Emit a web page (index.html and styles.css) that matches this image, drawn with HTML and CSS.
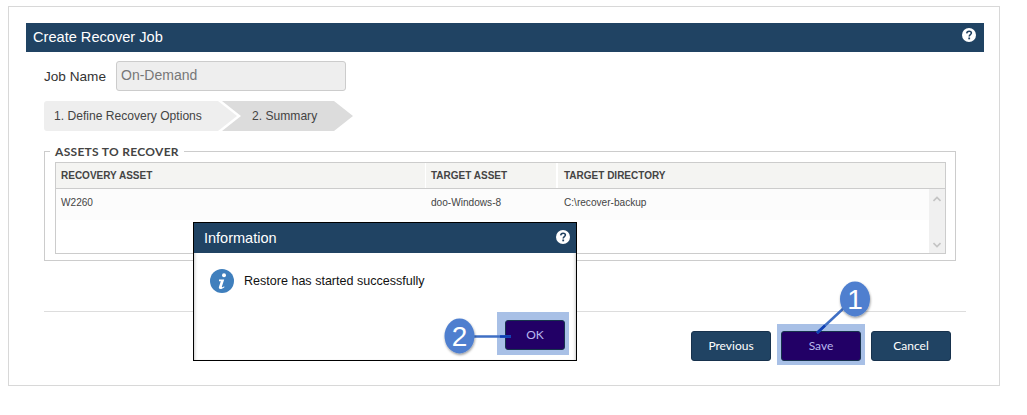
FILE: index.html
```html
<!DOCTYPE html>
<html lang="en">
<head>
<meta charset="utf-8">
<title>Create Recover Job</title>
<link rel="stylesheet" href="styles.css">
</head>
<body>
<main class="panel">
  <header class="titlebar">
    <h1 class="title">Create Recover Job</h1>
    <svg class="help help-main" viewBox="0 0 14 14"><circle cx="7" cy="7" r="7" fill="#fff"/><path d="M4.7 5.4C4.8 3.9 5.8 3.2 7.1 3.2C8.5 3.2 9.4 4 9.4 5.1C9.4 6.6 7.2 6.7 7.2 8.4" fill="none" stroke="#1f3f5f" stroke-width="1.5"/><rect x="6.3" y="9.5" width="1.8" height="1.8" fill="#1f3f5f"/></svg>
  </header>
  <div class="jobrow">
    <label class="joblabel">Job Name</label>
    <div class="jobinput">On-Demand</div>
  </div>
  <div class="steps">
    <div class="step step-one">1. Define Recovery Options</div>
    <div class="step step-two">2. Summary</div>
  </div>
  <section class="assets">
    <h2 class="legend">ASSETS TO RECOVER</h2>
    <div class="table">
      <div class="thead">
        <div class="th col-a">RECOVERY ASSET</div>
        <div class="th col-b">TARGET ASSET</div>
        <div class="th col-c">TARGET DIRECTORY</div>
      </div>
      <div class="tbody">
        <div class="rows">
          <div class="row">
            <div class="td col-a">W2260</div>
            <div class="td col-b">doo-Windows-8</div>
            <div class="td col-c">C:\recover-backup</div>
          </div>
        </div>
        <div class="scrollbar">
          <svg class="arrow" viewBox="0 0 8 6"><path d="M0.5 5L4 1.5L7.5 5" fill="none" stroke="#c4c4c4" stroke-width="1.6"/></svg>
          <svg class="arrow" viewBox="0 0 8 6"><path d="M0.5 1L4 4.5L7.5 1" fill="none" stroke="#c4c4c4" stroke-width="1.6"/></svg>
        </div>
      </div>
    </div>
  </section>
  <hr class="divider">
  <footer class="actions">
    <button class="btn">Previous</button>
    <button class="btn btn-active btn-save">Save</button>
    <button class="btn">Cancel</button>
  </footer>
</main>

<div class="dialog">
  <header class="dialog-title">
    <span>Information</span>
    <svg class="help help-dialog" viewBox="0 0 14 14"><circle cx="7" cy="7" r="7" fill="#fff"/><path d="M4.7 5.4C4.8 3.9 5.8 3.2 7.1 3.2C8.5 3.2 9.4 4 9.4 5.1C9.4 6.6 7.2 6.7 7.2 8.4" fill="none" stroke="#1f3f5f" stroke-width="1.5"/><rect x="6.3" y="9.5" width="1.8" height="1.8" fill="#1f3f5f"/></svg>
  </header>
  <div class="dialog-body">
    <svg class="info" viewBox="0 0 24 24"><circle cx="12" cy="12" r="12" fill="#3f7fbd"/><circle cx="14" cy="6.2" r="2" fill="#fff"/><path d="M9 10.5H14.2L11.9 17.6C11.7 18.3 12.4 18.5 13 18.1L14.2 17.3L14.4 18.2C13 19.4 11.8 20 10.4 20C9 20 8.6 19 9 17.8L10.8 12.2H9Z" fill="#fff"/></svg>
    <p class="message">Restore has started successfully</p>
  </div>
  <div class="dialog-foot">
    <button class="btn btn-active btn-ok">OK</button>
  </div>
</div>

<svg class="callouts" viewBox="0 0 1027 415">
  <defs>
    <filter id="shade" x="-30%" y="-30%" width="160%" height="160%"><feDropShadow dx="0.5" dy="1.5" stdDeviation="1.2" flood-color="#000" flood-opacity="0.4"/></filter>
  </defs>
  <path d="M473 336.500H511" stroke="#3f6fc4" stroke-width="2.500"/>
  <path d="M500 336.500H511" stroke="#0f3fb4" stroke-width="2.500"/>
  <path d="M845 307L817 333" stroke="#3f6fc4" stroke-width="2.500"/>
  <path d="M825 325.500L817 333" stroke="#0f3fb4" stroke-width="2.500"/>
  <ellipse cx="459.500" cy="336" rx="15" ry="17.500" fill="#4f7fcf" filter="url(#shade)"/>
  <ellipse cx="855" cy="299" rx="15" ry="17.500" fill="#4f7fcf" filter="url(#shade)"/>
  <text class="callout-num" x="459.500" y="346">2</text>
  <text class="callout-num" x="855" y="309">1</text>
</svg>
</body>
</html>
```
FILE: styles.css
```css
* {
  box-sizing: border-box;
}

html {
  background: #fff;
}

html,
body {
  margin: 0;
  height: 415px;
  overflow: hidden;
  font-family: "Liberation Sans", Arial, sans-serif;
}

.panel {
  width: 992px;
  height: 380px;
  margin: 6px 0 0 8px;
  padding: 16px 15px 0 17px;
  border: 1px solid #d8d8d8;
  display: flex;
  flex-direction: column;
}

.titlebar {
  height: 29px;
  flex: none;
  background: #204363;
  color: #fff;
  display: flex;
  align-items: center;
  justify-content: space-between;
  padding: 0 8px 0 7px;
}

.title {
  margin: 0;
  font-size: 14.600px;
  font-weight: 400;
  line-height: 29px;
}

.help {
  width: 14px;
  height: 14px;
  flex: none;
}

.help-main {
  margin-top: -5px;
}

.help-dialog {
  margin-bottom: 3px;
}

.jobrow {
  display: flex;
  align-items: center;
  margin: 9px 0 0 18px;
  height: 30px;
}

.joblabel {
  width: 72px;
  font-size: 13.600px;
  color: #333;
}

.jobinput {
  width: 230px;
  height: 30px;
  background: #eee;
  border: 1px solid #ccc;
  border-radius: 3px;
  padding: 0 4px;
  font-size: 14px;
  line-height: 26px;
  color: #777;
}

.steps {
  display: flex;
  margin: 10px 0 0 18px;
  height: 30px;
}

.step {
  height: 30px;
  font-size: 12.100px;
  line-height: 30px;
  color: #444;
}

.step-one {
  width: 197px;
  padding-left: 10px;
  background: #eee;
  border-radius: 3px 0 0 3px;
  clip-path: polygon(0 0, 174px 0, 193px 15px, 174px 30px, 0 30px);
}

.step-two {
  width: 131px;
  margin-left: -19px;
  padding-left: 30px;
  background: #dcdcdc;
  clip-path: polygon(0 0, 112px 0, 131px 15px, 112px 30px, 0 30px, 19px 15px);
}

.assets {
  position: relative;
  width: 912px;
  height: 110px;
  margin: 20px 0 0 18px;
  padding: 10px 10px 0;
  border: 1px solid #ccc;
}

.legend {
  position: absolute;
  top: -8px;
  left: 5px;
  margin: 0;
  padding: 0 5px;
  background: #fff;
  font-family: Lato, "Liberation Sans", sans-serif;
  font-size: 12px;
  font-weight: 700;
  line-height: 16px;
  letter-spacing: 0.300px;
  color: #444;
}

.table {
  width: 891px;
  height: 92px;
  border: 1px solid #ccc;
  display: flex;
  flex-direction: column;
}

.thead {
  height: 26px;
  flex: none;
  display: flex;
  border-bottom: 1px solid #ccc;
  background: #f4f4f2;
}

.th {
  font-size: 10px;
  font-weight: 700;
  line-height: 25px;
  color: #444;
  padding-left: 5px;
}

.th.col-b {
  border-left: 1px solid #fff;
  border-right: 2px solid #fff;
}

.col-a {
  width: 369px;
  flex: none;
}

.col-b {
  width: 133px;
  flex: none;
}

.col-c {
  flex: 1;
}

.th.col-c {
  padding-left: 6px;
}

.tbody {
  flex: 1;
  display: flex;
  min-height: 0;
}

.rows {
  flex: 1;
}

.row {
  height: 31px;
  display: flex;
  background: #fcfcfc;
}

.td {
  font-size: 10.100px;
  line-height: 28px;
  color: #444;
  padding-left: 5px;
}

.td.col-b {
  padding-left: 6px;
}

.td.col-c {
  padding-left: 6px;
}

.scrollbar {
  width: 16px;
  flex: none;
  background: #f0f0f0;
  display: flex;
  flex-direction: column;
  justify-content: space-between;
  align-items: center;
  padding: 7px 0 5px;
}

.arrow {
  width: 8px;
  height: 6px;
}

.divider {
  width: 922px;
  height: 1px;
  margin: 50px 0 0 18px;
  border: 0;
  background: #ddd;
  flex: none;
}

.actions {
  display: flex;
  gap: 10px;
  margin: 19px 0 0 665px;
}

.btn {
  position: relative;
  width: 80px;
  height: 30px;
  padding: 0;
  border: 1px solid #17324d;
  border-radius: 3px;
  background: #204363;
  color: #fff;
  font-family: Lato, "Liberation Sans", sans-serif;
  font-size: 12px;
  line-height: 28px;
}

.btn-active {
  background: #220066;
  color: #b9b9ee;
}

.btn-save::before,
.btn-ok::before {
  content: "";
  position: absolute;
  z-index: -1;
  background: #a8c0e6;
}

.btn-save::before {
  inset: -8px -5px -5px -5px;
}

.btn-ok::before {
  inset: -9px -5px -6px -9px;
}

.btn-ok {
  width: 60px;
}

.dialog {
  position: absolute;
  z-index: 1;
  left: 193px;
  top: 222px;
  width: 384px;
  height: 139px;
  border: 1px solid #000;
  background: #fff;
  box-shadow: inset 3px 0 3px -2px #ccc, inset -3px 0 3px -2px #ccc;
  display: flex;
  flex-direction: column;
}

.dialog-title {
  height: 30px;
  flex: none;
  background: #204363;
  color: #fff;
  display: flex;
  align-items: center;
  justify-content: space-between;
  padding: 0 6px 0 10px;
  font-size: 14.500px;
}

.dialog-body {
  display: flex;
  align-items: center;
  gap: 10px;
  padding: 16px 0 0 16px;
}

.info {
  width: 24px;
  height: 24px;
  flex: none;
}

.message {
  margin: 0;
  font-size: 12.550px;
  color: #111;
}

.dialog-foot {
  margin-top: auto;
  display: flex;
  justify-content: flex-end;
  padding: 0 11px 10px 0;
}

.callouts {
  position: absolute;
  z-index: 2;
  left: 0;
  top: 0;
  width: 1027px;
  height: 415px;
  pointer-events: none;
}

.callout-num {
  fill: #fff;
  font-family: "Liberation Sans", Arial, sans-serif;
  font-size: 28px;
  text-anchor: middle;
}
```
